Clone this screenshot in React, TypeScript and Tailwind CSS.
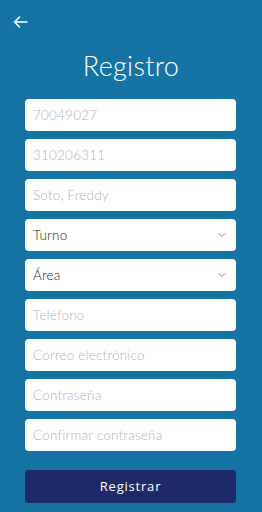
import { ChevronDown } from "lucide-react";

const fields = ["70049027", "310206311", "Soto, Freddy"];
const selects = ["Turno", "Área"];
const inputs = ["Teléfono", "Correo electrónico", "Contraseña", "Confirmar contraseña"];

export default function App() {
  return (
    <div className="min-h-[512px] w-[262px] bg-[#1574a4] font-['Lato',sans-serif]">
      {/* Top bar */}
      <div className="h-[44px] pl-[13px] pt-[15px]">
        <svg width="15" height="14" viewBox="0 0 15 14" fill="none" stroke="white" strokeWidth="1.6" strokeLinecap="round" strokeLinejoin="round">
          <path d="M14 7H1.5M6.5 2L1.5 7l5 5" />
        </svg>
      </div>

      <h1 className="text-center text-[27px] font-light leading-[36px] text-white tracking-[0.3px] mt-[4px]">Registro</h1>

      <div className="pl-[25px] pr-[26px] mt-[15px] flex flex-col gap-[8px]">
        {fields.map((f) => (
          <div key={f} className="h-[32px] rounded-[4px] bg-white flex items-center pl-[8px] text-[13.5px] font-light tracking-[0.2px] text-[#b4b4b4]">
            {f}
          </div>
        ))}
        {selects.map((s) => (
          <div key={s} className="h-[32px] rounded-[4px] bg-white flex items-center justify-between pl-[8px] pr-[8px] text-[13.5px] font-light tracking-[0.2px] text-[#1a1a1a]">
            <span>{s}</span>
            <ChevronDown size={12} strokeWidth={1.5} className="text-[#666666]" />
          </div>
        ))}
        {inputs.map((f) => (
          <div key={f} className="h-[32px] rounded-[4px] bg-white flex items-center pl-[8px] text-[13.5px] font-light tracking-[0.2px] text-[#b4b4b4]">
            {f}
          </div>
        ))}
      </div>

      <div className="pl-[25px] pr-[26px] mt-[19px]">
        <button className="w-full h-[33px] rounded-[3px] bg-[#1e2a68] text-white text-[13px] tracking-[0.8px] font-['Open_Sans',sans-serif]">
          Registrar
        </button>
      </div>
    </div>
  );
}
